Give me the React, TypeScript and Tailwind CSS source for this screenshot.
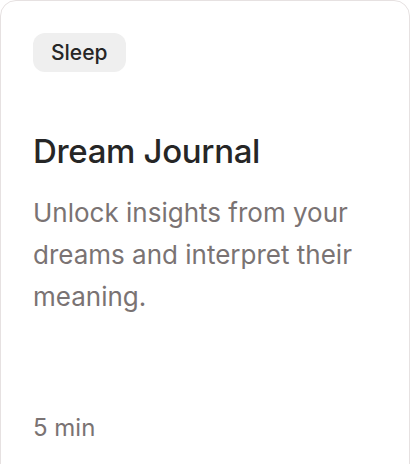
export default function App() {
  return (
    <div className="h-screen overflow-hidden bg-white" style={{ fontFamily: "Inter, 'Noto Sans', sans-serif" }}>
      <div className="flex h-[500px] w-[410px] flex-col rounded-2xl border border-[#e6e1e1] bg-white px-8 pt-8">
        <span className="self-start rounded-xl bg-[#efefef] px-[18px] py-[6px] text-[21px] font-medium leading-[27px] text-[#262626]">
          Sleep
        </span>
        <h3 className="mt-[59px] text-[33px] font-medium leading-[40px] tracking-[-0.01em] text-[#262626]">
          Dream Journal
        </h3>
        <p className="mt-[21px] text-[26px] leading-[42px] text-[#7a7373]">
          Unlock insights from your dreams and interpret their meaning.
        </p>
        <p className="mt-[96px] text-[24px] leading-[28px] text-[#7a7373]">5 min</p>
      </div>
    </div>
  );
}
